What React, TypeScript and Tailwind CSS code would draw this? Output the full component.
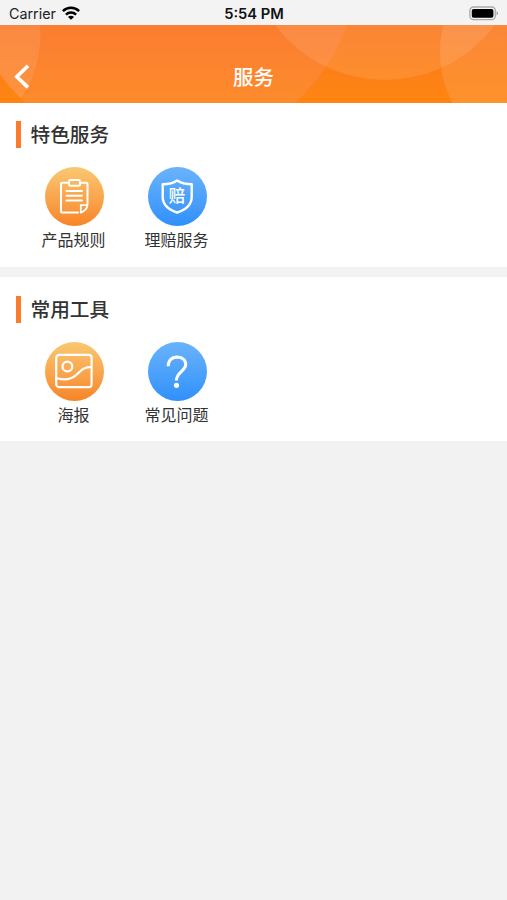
import React from "react";

function Wifi() {
  return (
    <svg width="18" height="14" viewBox="0 0 18 14" className="relative -top-px ml-[6px]" fill="none" stroke="#000" strokeWidth="2.5">
      <path d="M0.9 5.1C5.4 0.7 12.6 0.7 17.1 5.1" />
      <path d="M3.9 8.6C6.8 5.8 11.2 5.8 14.1 8.6" />
      <path d="M9 13.8L6 10.9C7.7 9.3 10.3 9.3 12 10.9Z" fill="#000" stroke="none" />
    </svg>
  );
}

function Battery() {
  return (
    <svg width="30" height="15" viewBox="0 0 30 15">
      <rect x="0.9" y="1" width="25.4" height="12.6" rx="3.6" fill="#f4f4f4" stroke="#aaaaaa" strokeWidth="1.3" />
      <rect x="2.8" y="2.9" width="21.6" height="8.8" rx="1.8" fill="#000" />
      <path d="M27.6 5.2C29.4 5.8 29.4 8.8 27.6 9.4Z" fill="#999" />
    </svg>
  );
}

function HeaderArt() {
  return (
    <svg className="absolute inset-0" width="507" height="78" viewBox="0 25 507 78">
      <defs>
        <linearGradient id="lens" x1="0" y1="0" x2="0" y2="1">
          <stop offset="0" stopColor="#fb7d30" />
          <stop offset="1" stopColor="#fd8b2c" />
        </linearGradient>
        <linearGradient id="base" x1="0" y1="0" x2="0" y2="1">
          <stop offset="0" stopColor="#fb7820" />
          <stop offset="1" stopColor="#fe8511" />
        </linearGradient>
      </defs>
      <rect y="25" width="507" height="78" fill="url(#base)" />
      <path d="M0 25H347A200 200 0 0 1 295 103H26A200 200 0 0 1 0 74Z" fill="url(#lens)" />
      <path d="M0 25H40C42 50 36 76 21 98Q9 88 0 74Z" fill="#fff" fillOpacity="0.09" />
      <circle cx="385" cy="-57" r="137" fill="#fff" fillOpacity="0.1" />
      <circle cx="550" cy="52" r="110" fill="#fff" fillOpacity="0.11" />
    </svg>
  );
}

function ClipboardIcon() {
  return (
    <svg width="59" height="59" viewBox="0 0 59 59" fill="none" stroke="#fff" strokeWidth="2" strokeLinejoin="round" strokeLinecap="round">
      <path d="M22.5 15.8H17Q16 15.8 16 16.8V44.5Q16 45.5 17 45.5H33" />
      <path d="M36 15.8H41.5Q42.5 15.8 42.5 16.8V36.8" />
      <rect x="24" y="13" width="11" height="5.8" rx="1.4" />
      <path d="M21.5 24.1H37M21.5 28.8H37M21.5 33.5H37" />
      <path d="M35.8 38.2H42.5Q41.8 43.5 35.8 45.6Z" strokeWidth="1.8" />
    </svg>
  );
}

function ShieldIcon() {
  return (
    <svg width="59" height="59" viewBox="0 0 59 59">
      <path d="M29.2 13.5C33.7 16.6 38.2 17.3 43.7 17.3V30C43.7 37.5 38.2 42.5 29.2 45.5C20.2 42.5 14.7 37.5 14.7 30V17.3C20.2 17.3 24.7 16.6 29.2 13.5Z" fill="none" stroke="#fff" strokeWidth="2.4" strokeLinejoin="round" />
      <text x="29" y="34.6" textAnchor="middle" fontSize="16.5" fontWeight="500" fill="#fff">赔</text>
    </svg>
  );
}

function PosterIcon() {
  return (
    <svg width="59" height="59" viewBox="0 0 59 59" fill="none" stroke="#fff" strokeWidth="2.2">
      <rect x="11.2" y="12.8" width="35.4" height="32.4" rx="3" />
      <circle cx="22.4" cy="24.6" r="4.9" />
      <path d="M12 36.2C19 38.2 25.5 38 31 33.2C36 29 37.5 25.2 46.5 24.8" />
    </svg>
  );
}

function QuestionIcon() {
  return (
    <svg width="59" height="59" viewBox="0 0 59 59" fill="none" stroke="#fff" strokeWidth="3.1">
      <path d="M20.2 24.3C20.2 18.6 23.7 15.1 29 15.1C34.1 15.1 37.7 18 37.7 22.6C37.7 29.2 28.4 29.8 28.4 38.6" />
      <circle cx="28.5" cy="43.3" r="2.6" fill="#fff" stroke="none" />
    </svg>
  );
}

interface ServiceProps {
  label: string;
  tone: string;
  children: React.ReactNode;
}

function Service({ label, tone, children }: ServiceProps) {
  return (
    <div className="flex w-[103px] flex-col items-center">
      <div className={"size-[59px] overflow-hidden rounded-full bg-linear-to-b " + tone}>{children}</div>
      <span className="mt-px pr-[2px] text-[16px] leading-6 text-[#333]">{label}</span>
    </div>
  );
}

interface SectionProps {
  title: string;
  inset: string;
  children: React.ReactNode;
}

function Section({ title, inset, children }: SectionProps) {
  return (
    <section className={"h-[164px] bg-white " + inset}>
      <div className="flex h-[28px] items-center pl-[15.5px]">
        <i className="h-[27px] w-[5px] bg-[#fb7b2c]" />
        <h2 className="ml-[10px] text-[19.7px] leading-7 font-medium text-[#333]">{title}</h2>
      </div>
      <div className="mt-[19px] flex pl-[23px]">{children}</div>
    </section>
  );
}

const ORANGE = "from-[#f9c870] to-[#f78426]";
const BLUE = "from-[#69b3fb] to-[#2f90fb]";

export default function App() {
  return (
    <div className="h-[900px] w-[507px] overflow-hidden bg-[#f2f2f2] font-['Noto_Sans_CJK_SC',sans-serif]">
      <div className="grid h-[25px] grid-cols-3 items-center bg-[#f3f3f3] pt-[2px] pl-[9px] pr-[8px] font-[Inter,sans-serif] text-[#222]">
        <div className="flex items-center">
          <span className="text-[14.3px] leading-5">Carrier</span>
          <Wifi />
        </div>
        <span className="text-center text-[14.7px] leading-5 font-semibold text-[#111]">5:54 PM</span>
        <div className="flex justify-end">
          <Battery />
        </div>
      </div>
      <header className="relative h-[78px]">
        <HeaderArt />
        <div className="relative flex h-full items-center justify-center pt-[23px]">
          <svg className="absolute top-[39px] left-[14px]" width="16" height="25" viewBox="0 0 16 25" fill="none" stroke="#fff" strokeWidth="3.7">
            <path d="M14 1.8L2.8 12.8L14 23.4" />
          </svg>
          <h1 className="text-[20.5px] leading-7 font-medium text-white">服务</h1>
        </div>
      </header>
      <main className="flex flex-col gap-[10px]">
        <Section title="特色服务" inset="pt-[17px]">
          <Service label="产品规则" tone={ORANGE}><ClipboardIcon /></Service>
          <Service label="理赔服务" tone={BLUE}><ShieldIcon /></Service>
        </Section>
        <Section title="常用工具" inset="pt-[18px]">
          <Service label="海报" tone={ORANGE}><PosterIcon /></Service>
          <Service label="常见问题" tone={BLUE}><QuestionIcon /></Service>
        </Section>
      </main>
    </div>
  );
}
